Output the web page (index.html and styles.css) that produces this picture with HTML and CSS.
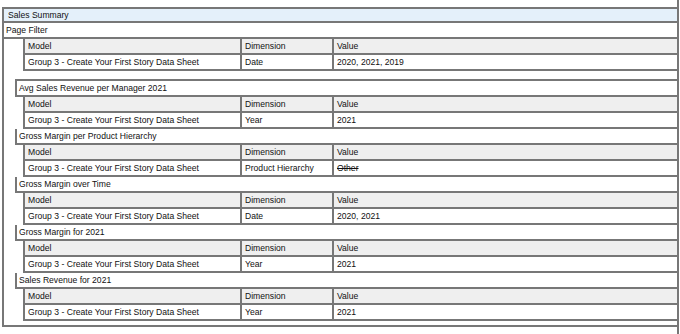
FILE: index.html
```html
<!DOCTYPE html>
<html>
<head>
<meta charset="utf-8">
<link rel="stylesheet" href="styles.css">
</head>
<body>
<div class="frame">
  <div class="report">
    <div class="report-title">Sales Summary</div>
    <div class="page-filter">Page Filter</div>
    <div class="report-body">
      <table class="grid filter-grid">
        <tr class="head"><td class="c-model">Model</td><td class="c-dim">Dimension</td><td class="c-val">Value</td></tr>
        <tr><td>Group 3 - Create Your First Story Data Sheet</td><td>Date</td><td>2020, 2021, 2019</td></tr>
      </table>

      <div class="widget">
        <div class="widget-title">Avg Sales Revenue per Manager 2021</div>
        <table class="grid">
          <tr class="head"><td class="c-model">Model</td><td class="c-dim">Dimension</td><td class="c-val">Value</td></tr>
          <tr><td>Group 3 - Create Your First Story Data Sheet</td><td>Year</td><td>2021</td></tr>
        </table>
      </div>

      <div class="widget">
        <div class="widget-title">Gross Margin per Product Hierarchy</div>
        <table class="grid">
          <tr class="head"><td class="c-model">Model</td><td class="c-dim">Dimension</td><td class="c-val">Value</td></tr>
          <tr><td>Group 3 - Create Your First Story Data Sheet</td><td>Product Hierarchy</td><td><s>Other</s></td></tr>
        </table>
      </div>

      <div class="widget">
        <div class="widget-title">Gross Margin over Time</div>
        <table class="grid">
          <tr class="head"><td class="c-model">Model</td><td class="c-dim">Dimension</td><td class="c-val">Value</td></tr>
          <tr><td>Group 3 - Create Your First Story Data Sheet</td><td>Date</td><td>2020, 2021</td></tr>
        </table>
      </div>

      <div class="widget">
        <div class="widget-title">Gross Margin for 2021</div>
        <table class="grid">
          <tr class="head"><td class="c-model">Model</td><td class="c-dim">Dimension</td><td class="c-val">Value</td></tr>
          <tr><td>Group 3 - Create Your First Story Data Sheet</td><td>Year</td><td>2021</td></tr>
        </table>
      </div>

      <div class="widget">
        <div class="widget-title">Sales Revenue for 2021</div>
        <table class="grid">
          <tr class="head"><td class="c-model">Model</td><td class="c-dim">Dimension</td><td class="c-val">Value</td></tr>
          <tr><td>Group 3 - Create Your First Story Data Sheet</td><td>Year</td><td>2021</td></tr>
        </table>
      </div>
    </div>
  </div>
</div>
</body>
</html>
```

FILE: styles.css
```css
html, body {
  margin: 0;
  padding: 0;
  background: #ffffff;
}

body {
  font-family: "Liberation Sans", Arial, sans-serif;
  font-size: 8.6px;
  color: #111111;
}

.frame {
  width: 679px;
  height: 334px;
  box-sizing: border-box;
  border-right: 2px solid #777777;
  padding-top: 7px;
  padding-left: 2px;
}

.report {
  border-top: 2px solid #777777;
  border-left: 2px solid #777777;
  border-bottom: 2px solid #777777;
}

.report-title {
  height: 12px;
  line-height: 12px;
  padding-left: 4px;
  background: #e4f0fa;
  border-bottom: 2px solid #777777;
}

.page-filter {
  height: 14px;
  line-height: 14px;
  padding-left: 2px;
  border-bottom: 2px solid #777777;
}

.report-body {
  padding: 0 0 4px 11px;
}

.grid {
  border-collapse: separate;
  border-spacing: 0;
  width: 654px;
  margin-left: 8px;
  border-left: 2px solid #777777;
  table-layout: fixed;
}

.grid td {
  box-sizing: border-box;
  height: 16px;
  padding: 0 0 0 3px;
  line-height: 14px;
  border-right: 2px solid #777777;
  border-bottom: 2px solid #777777;
  white-space: nowrap;
}

.grid tr td:last-child {
  border-right: none;
}

.grid .head td {
  background: #efefef;
}

.c-model { width: 217px; }
.c-dim { width: 92px; }

.filter-grid + .widget {
  margin-top: 8px;
}

.widget-title {
  height: 14px;
  line-height: 14px;
  padding-left: 2px;
  border-top: 2px solid #777777;
  border-left: 2px solid #777777;
  border-bottom: 2px solid #777777;
}

.widget + .widget .widget-title {
  border-top: none;
}

.grid s {
  text-decoration: line-through;
}
```
